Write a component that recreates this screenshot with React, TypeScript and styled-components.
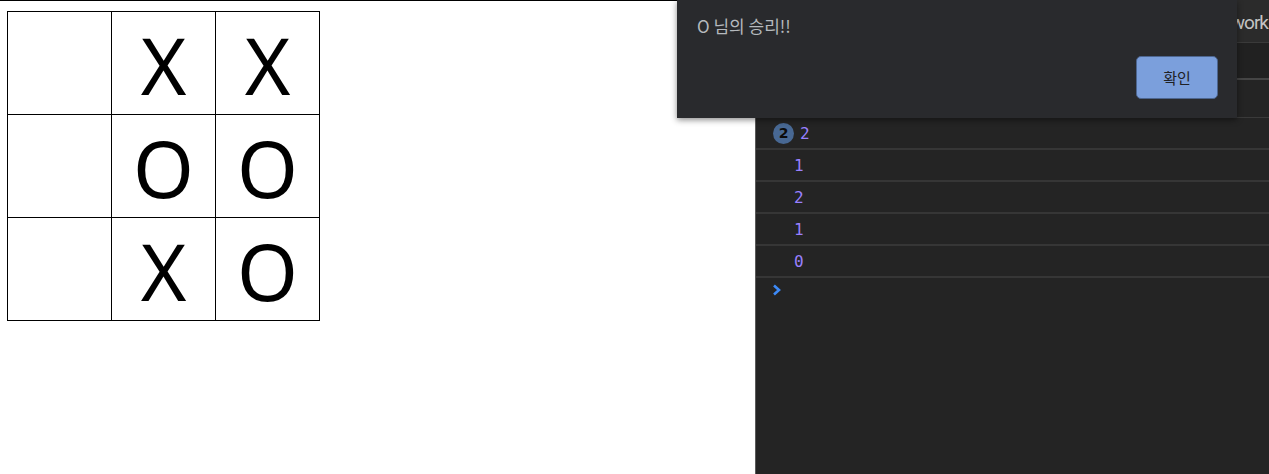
import React from "react";
import styled, { createGlobalStyle } from "styled-components";

const GlobalStyle = createGlobalStyle`
  html, body { margin: 0; padding: 0; background: #ffffff; overflow: hidden; }
  #root { width: 1269px; height: 474px; }
`;

const Screen = styled.div`
  position: relative;
  display: flex;
  width: 1269px;
  height: 474px;
`;

const PageArea = styled.div`
  width: 755px;
  flex: none;
  background: #ffffff;
  border-top: 1px solid #000000;
  padding: 10px 0 0 7px;
  box-sizing: border-box;
`;

const Board = styled.div`
  display: grid;
  grid-template-columns: repeat(3, 104px);
  grid-auto-rows: 103px;
  width: max-content;
  border-left: 1px solid #000;
  border-top: 1px solid #000;
`;

const Cell = styled.div`
  box-sizing: border-box;
  height: 103px;
  padding-top: 4px;
  border-right: 1px solid #000;
  border-bottom: 1px solid #000;
  text-align: center;
  font-family: "Noto Sans", sans-serif;
  font-size: 78px;
  line-height: 98px;
  color: #000;
`;

const DevTools = styled.div`
  flex: 1;
  display: flex;
  flex-direction: column;
  background: #242424;
  border-left: 1px solid #5a5a5a;
  overflow: hidden;
`;

const TabBar = styled.div`
  height: 42px;
  flex: none;
  display: flex;
  justify-content: flex-end;
  align-items: center;
  gap: 24px;
  background: #2b2b2b;
  border-bottom: 1px solid #3a3a3a;
  overflow: hidden;
  padding-right: 1px;
`;

const Tab = styled.span`
  font-family: "Roboto", sans-serif;
  font-size: 19px;
  letter-spacing: -1px;
  color: #c4c4c4;
  white-space: nowrap;
  line-height: 1;
  margin-top: 2px;
`;

const Toolbar = styled.div`
  height: 35px;
  flex: none;
  background: #212121;
  border-bottom: 2px solid #454545;
`;

const FilterRow = styled.div`
  height: 37px;
  flex: none;
  background: #242424;
  border-bottom: 1px solid #3a3a3a;
`;

const LogRow = styled.div`
  height: 30px;
  flex: none;
  display: flex;
  align-items: center;
  padding-left: 17px;
  gap: 6px;
  border-bottom: 2px solid #363636;
`;

const Badge = styled.span`
  width: 21px;
  height: 21px;
  border-radius: 50%;
  background: #486893;
  color: #0b0b0b;
  font-family: "DejaVu Sans", sans-serif;
  font-weight: bold;
  font-size: 14px;
  display: flex;
  align-items: center;
  justify-content: center;
`;

const LogValue = styled.span<{ $indent?: boolean }>`
  font-family: "DejaVu Sans Mono", monospace;
  font-size: 16px;
  color: #9980ff;
  margin-left: ${(p) => (p.$indent ? "21px" : "0")};
`;

const Prompt = styled.div`
  height: 24px;
  display: flex;
  align-items: center;
  padding-left: 16px;
`;

const Dialog = styled.div`
  position: absolute;
  left: 677px;
  top: 0;
  width: 560px;
  height: 118px;
  box-sizing: border-box;
  background: #292a2d;
  box-shadow: 0 2px 6px rgba(0, 0, 0, 0.45);
  display: flex;
  flex-direction: column;
  justify-content: space-between;
  padding: 13px 19px 19px 20px;
`;

const Message = styled.div`
  font-family: "Noto Sans CJK KR", sans-serif;
  font-size: 17px;
  color: #b5b9be;
  line-height: 26px;
`;

const Actions = styled.div`
  display: flex;
  justify-content: flex-end;
`;

const OkButton = styled.button`
  width: 82px;
  height: 43px;
  box-sizing: border-box;
  background: #7b9fdc;
  border: 1px solid #4d6690;
  border-radius: 5px;
  font-family: "Noto Sans CJK KR", sans-serif;
  font-size: 15px;
  color: #202124;
  padding: 0;
`;

const board = ["", "X", "X", "", "O", "O", "", "X", "O"];
const logs = ["1", "2", "1", "0"];

export default function App() {
  return (
    <>
      <GlobalStyle />
      <Screen>
        <PageArea>
          <Board>
            {board.map((v, i) => (
              <Cell key={i}>{v}</Cell>
            ))}
          </Board>
        </PageArea>
        <DevTools>
          <TabBar>
            <Tab>Elements</Tab>
            <Tab>Console</Tab>
            <Tab>Sources</Tab>
            <Tab>Network</Tab>
          </TabBar>
          <Toolbar />
          <FilterRow />
          <LogRow>
            <Badge>2</Badge>
            <LogValue>2</LogValue>
          </LogRow>
          {logs.map((v, i) => (
            <LogRow key={i}>
              <LogValue $indent>{v}</LogValue>
            </LogRow>
          ))}
          <Prompt>
            <svg width="10" height="12" viewBox="0 0 10 12">
              <polyline
                points="2,1.5 7,6 2,10.5"
                fill="none"
                stroke="#3d8af7"
                strokeWidth="2.6"
              />
            </svg>
          </Prompt>
        </DevTools>
        <Dialog>
          <Message>O 님의 승리!!</Message>
          <Actions>
            <OkButton>확인</OkButton>
          </Actions>
        </Dialog>
      </Screen>
    </>
  );
}
